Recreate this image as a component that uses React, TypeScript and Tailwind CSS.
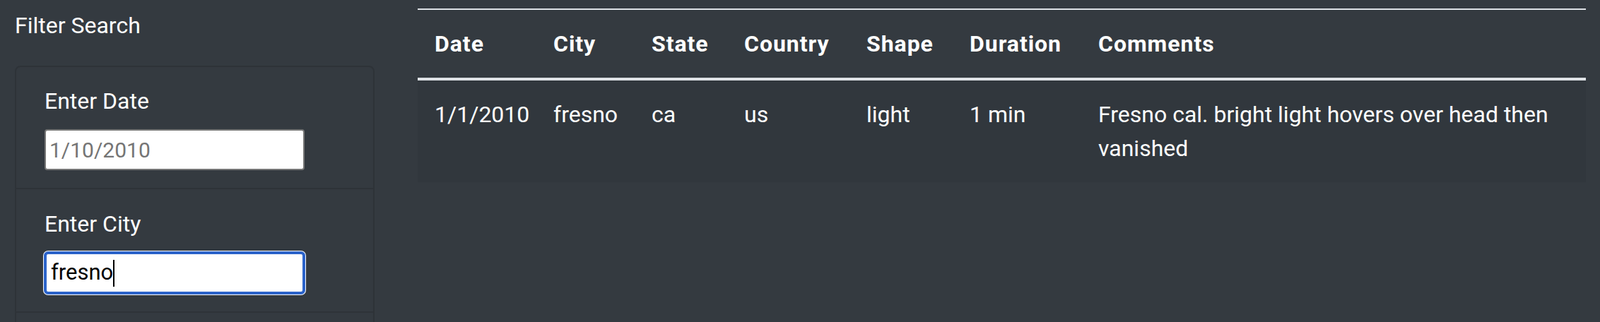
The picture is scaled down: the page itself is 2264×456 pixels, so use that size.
import React from 'react';

type Sighting = {
  datetime: string;
  city: string;
  state: string;
  country: string;
  shape: string;
  duration: string;
  comments: string;
};

const SIGHTINGS: Sighting[] = [
  {
    datetime: '1/1/2010',
    city: 'fresno',
    state: 'ca',
    country: 'us',
    shape: 'light',
    duration: '1 min',
    comments: 'Fresno cal. bright light hovers over head then vanished',
  },
];

const COLUMNS = [
  { label: 'Date', width: 'w-[168px]' },
  { label: 'City', width: 'w-[139px]' },
  { label: 'State', width: 'w-[131px]' },
  { label: 'Country', width: 'w-[173px]' },
  { label: 'Shape', width: 'w-[146px]' },
  { label: 'Duration', width: 'w-[182px]' },
  { label: 'Comments', width: '' },
];

export default function App() {
  return (
    <div className="min-h-screen bg-[#343a40] text-white font-['Roboto','Liberation_Sans',sans-serif] flex pt-[12px] pl-[21px] pr-[20px]">
      <aside className="w-[509px] shrink-0">
        <p className="text-[32px] leading-[48px] mb-[33px]">Filter Search</p>
        <ul className="border-2 border-[#2e3338] rounded-[8px]">
          <li className="px-[40px] pt-[24px] pb-[25px] border-b-2 border-[#2e3338]">
            <label className="block text-[32px] leading-[48px] mb-[16px]">Enter Date</label>
            <input
              type="text"
              placeholder="1/10/2010"
              className="block w-[368px] h-[58px] bg-white border-2 border-[#767676] rounded-[4px] px-[5px] text-[30px] text-black placeholder:text-[#757575] outline-none"
            />
          </li>
          <li className="px-[40px] pt-[25px] pb-[24px] border-b-2 border-[#2e3338]">
            <label className="block text-[32px] leading-[48px] mb-[16px]">Enter City</label>
            <div className="flex items-center w-[370px] h-[61px] -ml-px -mt-px bg-white border-[4px] border-[#2a62c9] rounded-[6px] ring-1 ring-white pl-[6px] text-[31px] text-black">
              <span>fresno</span>
              <span className="inline-block w-[2px] h-[38px] bg-black" />
            </div>
          </li>
          <li className="h-[60px]" />
        </ul>
      </aside>

      <main className="ml-[61px] flex-1 min-w-0">
        <table className="w-full table-fixed border-separate border-spacing-0 text-[32px] leading-[48px]">
          <colgroup>
            {COLUMNS.map((col) => (
              <col key={col.label} className={col.width} />
            ))}
          </colgroup>
          <thead>
            <tr>
              {COLUMNS.map((col) => (
                <th
                  key={col.label}
                  className="text-left font-bold tracking-[0.03em] p-[24px] border-t-2 border-b-4 border-[#dee2e6] align-bottom"
                >
                  {col.label}
                </th>
              ))}
            </tr>
          </thead>
          <tbody>
            {SIGHTINGS.map((s, i) => (
              <tr key={i} className="bg-[#31373d]">
                <td className="p-[24px] align-top">{s.datetime}</td>
                <td className="p-[24px] align-top">{s.city}</td>
                <td className="p-[24px] align-top">{s.state}</td>
                <td className="p-[24px] align-top">{s.country}</td>
                <td className="p-[24px] align-top">{s.shape}</td>
                <td className="p-[24px] align-top">{s.duration}</td>
                <td className="p-[24px] align-top">{s.comments}</td>
              </tr>
            ))}
          </tbody>
        </table>
      </main>
    </div>
  );
}
